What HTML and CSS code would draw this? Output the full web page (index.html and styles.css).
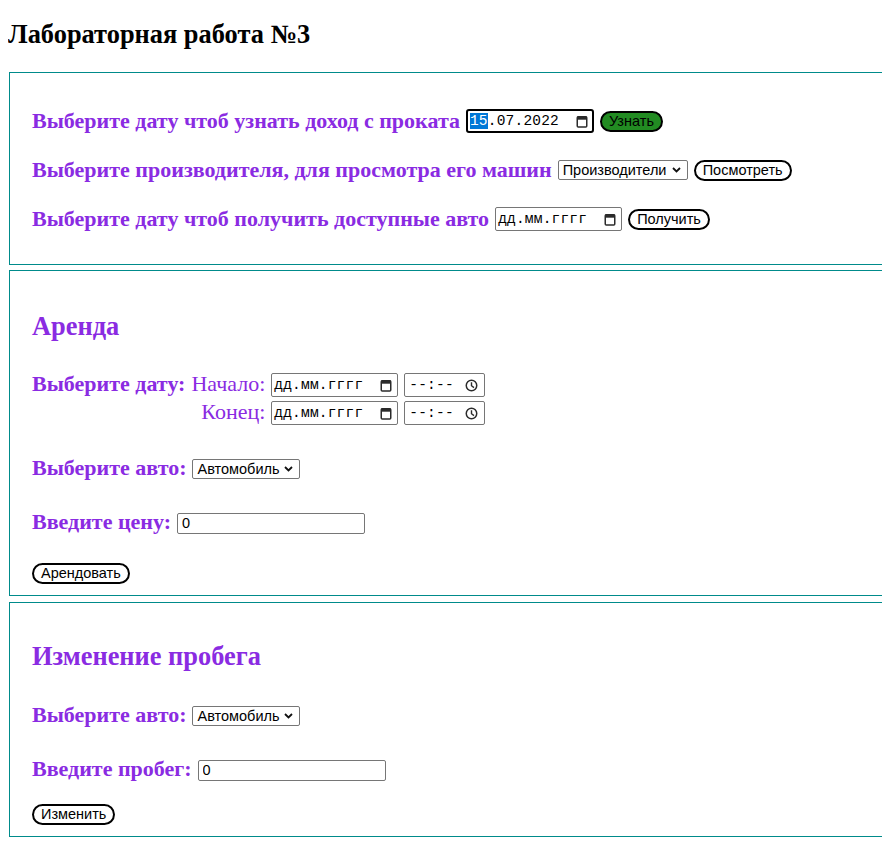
FILE: index.html
```html
<!DOCTYPE html>
<html lang="ru">
<head>
<meta charset="utf-8">
<title>Лабораторная работа №3</title>
<link rel="stylesheet" href="styles.css">
</head>
<body>
<h1 class="title">Лабораторная работа №3</h1>

<section class="box box-report">
  <div class="row">
    <span class="label">Выберите дату чтоб узнать доход с проката</span>
    <span class="date date-focused"><span class="date-text"><span class="seg-selected">15</span>.07.2022</span><svg class="cal-icon" width="12" height="13" viewBox="0 0 12 13"><rect x="1.25" y="1.75" width="9.5" height="10.25" rx="1" fill="none" stroke="#2b2b2b" stroke-width="1.5"/><rect x="1" y="1.5" width="10" height="3.2" fill="#2b2b2b"/></svg></span>
    <button class="btn btn-green">Узнать</button>
  </div>
  <div class="row">
    <span class="label">Выберите производителя, для просмотра его машин</span>
    <span class="select select-maker"><select class="select-field"><option>Производители</option></select><svg class="chevron" width="9" height="6" viewBox="0 0 9 6"><path d="M1 1 L4.5 4.5 L8 1" fill="none" stroke="#111" stroke-width="1.8"/></svg></span>
    <button class="btn">Посмотреть</button>
  </div>
  <div class="row">
    <span class="label">Выберите дату чтоб получить доступные авто</span>
    <span class="date"><span class="date-text">дд.мм.гггг</span><svg class="cal-icon" width="12" height="13" viewBox="0 0 12 13"><rect x="1.25" y="1.75" width="9.5" height="10.25" rx="1" fill="none" stroke="#2b2b2b" stroke-width="1.5"/><rect x="1" y="1.5" width="10" height="3.2" fill="#2b2b2b"/></svg></span>
    <button class="btn">Получить</button>
  </div>
</section>

<section class="box box-rent">
  <h2 class="section-title">Аренда</h2>
  <div class="period">
    <span class="label">Выберите дату:</span>
    <span class="sublabel">Начало:</span>
    <span class="date"><span class="date-text">дд.мм.гггг</span><svg class="cal-icon" width="12" height="13" viewBox="0 0 12 13"><rect x="1.25" y="1.75" width="9.5" height="10.25" rx="1" fill="none" stroke="#2b2b2b" stroke-width="1.5"/><rect x="1" y="1.5" width="10" height="3.2" fill="#2b2b2b"/></svg></span>
    <span class="time"><span class="time-text">--:--</span><svg class="clock-icon" width="13" height="13" viewBox="0 0 13 13"><circle cx="6.5" cy="6.5" r="5.25" fill="none" stroke="#2b2b2b" stroke-width="1.5"/><path d="M6.5 3.2 V6.7 L9 8.6" fill="none" stroke="#2b2b2b" stroke-width="1.4"/></svg></span>
    <span class="sublabel sublabel-end">Конец:</span>
    <span class="date"><span class="date-text">дд.мм.гггг</span><svg class="cal-icon" width="12" height="13" viewBox="0 0 12 13"><rect x="1.25" y="1.75" width="9.5" height="10.25" rx="1" fill="none" stroke="#2b2b2b" stroke-width="1.5"/><rect x="1" y="1.5" width="10" height="3.2" fill="#2b2b2b"/></svg></span>
    <span class="time"><span class="time-text">--:--</span><svg class="clock-icon" width="13" height="13" viewBox="0 0 13 13"><circle cx="6.5" cy="6.5" r="5.25" fill="none" stroke="#2b2b2b" stroke-width="1.5"/><path d="M6.5 3.2 V6.7 L9 8.6" fill="none" stroke="#2b2b2b" stroke-width="1.4"/></svg></span>
  </div>
  <div class="row row-car">
    <span class="label">Выберите авто:</span>
    <span class="select select-car"><select class="select-field"><option>Автомобиль</option></select><svg class="chevron" width="9" height="6" viewBox="0 0 9 6"><path d="M1 1 L4.5 4.5 L8 1" fill="none" stroke="#111" stroke-width="1.8"/></svg></span>
  </div>
  <div class="row row-input">
    <span class="label">Введите цену:</span>
    <input class="text-input" type="text" value="0">
  </div>
  <div class="row row-action">
    <button class="btn">Арендовать</button>
  </div>
</section>

<section class="box box-mileage">
  <h2 class="section-title">Изменение пробега</h2>
  <div class="row row-car">
    <span class="label">Выберите авто:</span>
    <span class="select select-car"><select class="select-field"><option>Автомобиль</option></select><svg class="chevron" width="9" height="6" viewBox="0 0 9 6"><path d="M1 1 L4.5 4.5 L8 1" fill="none" stroke="#111" stroke-width="1.8"/></svg></span>
  </div>
  <div class="row row-input">
    <span class="label">Введите пробег:</span>
    <input class="text-input" type="text" value="0">
  </div>
  <div class="row row-action">
    <button class="btn">Изменить</button>
  </div>
</section>
</body>
</html>
```

FILE: styles.css
```css
html {
  overflow: hidden;
}

body {
  margin: 8px;
  background: #fff;
  font-family: "Liberation Serif", "Times New Roman", serif;
}

.title {
  font: bold 26.4px/30px "Liberation Serif", "Times New Roman", serif;
  color: #000;
  margin: 11px 0 23px;
}

.box {
  box-sizing: border-box;
  width: calc(100% + 160px);
  border: 1px solid #008b8b;
  margin-left: 1px;
  padding-left: 22px;
  display: flex;
  flex-direction: column;
  align-items: flex-start;
}

.box-report {
  padding-top: 36px;
  padding-bottom: 33px;
  gap: 25px;
}

.box-rent {
  margin-top: 5px;
  padding-top: 40px;
  padding-bottom: 10px;
}

.box-mileage {
  margin-top: 6px;
  padding-top: 38px;
  padding-bottom: 10px;
}

.section-title {
  font: bold 26.4px/30px "Liberation Serif", "Times New Roman", serif;
  color: #8a2be2;
  margin: 0;
}

.row {
  display: flex;
  align-items: center;
  gap: 6px;
  height: 24px;
}

.label {
  font: bold 22px/24px "Liberation Serif", "Times New Roman", serif;
  color: #8a2be2;
  margin-bottom: 3px;
  white-space: nowrap;
}

.box-report .label {
  margin-bottom: 1px;
}

.sublabel {
  font: 22px/24px "Liberation Serif", "Times New Roman", serif;
  color: #8a2be2;
  margin-bottom: 3px;
  justify-self: end;
  white-space: nowrap;
}

.sublabel-end {
  grid-column: 2;
}

.period {
  margin-top: 32px;
  display: grid;
  grid-template-columns: auto auto auto auto;
  grid-template-rows: 24px 24px;
  column-gap: 6px;
  row-gap: 4px;
  align-items: center;
}

.box-rent .row-car { margin-top: 32px; }
.box-rent .row-input { margin-top: 30px; }
.box-rent .row-action { margin-top: 26px; }

.box-mileage .row-car { margin-top: 33px; }
.box-mileage .row-input { margin-top: 30px; }
.box-mileage .row-action { margin-top: 20px; }

/* date / time fields */
.date,
.time {
  display: inline-flex;
  align-items: center;
  justify-content: space-between;
  box-sizing: border-box;
  height: 24px;
  border: 1px solid #767676;
  border-radius: 2px;
  background: #fff;
  font: 14.5px/18px "Liberation Mono", "DejaVu Sans Mono", monospace;
  color: #000;
  letter-spacing: 0.2px;
}

.date {
  width: 127px;
  padding: 0 5px 0 2px;
}

.time {
  width: 81px;
  padding: 0 6px 0 4px;
}

.date-focused {
  width: 128px;
  border: 2px solid #000;
  border-radius: 3px;
  padding: 0 4px 0 2px;
}

.seg-selected {
  background: #0078d7;
  color: #fff;
}

.cal-icon,
.clock-icon {
  flex: none;
}

/* select */
.select {
  position: relative;
  display: inline-flex;
}

.select-field {
  appearance: none;
  -webkit-appearance: none;
  box-sizing: border-box;
  height: 20px;
  margin: 0;
  padding: 0 18px 0 4px;
  border: 1px solid #767676;
  border-radius: 2px;
  background: #fff;
  color: #000;
  font: 14.5px "Liberation Sans", Arial, sans-serif;
}

.select-maker .select-field { width: 130px; }
.select-car .select-field { width: 108px; }

.chevron {
  position: absolute;
  right: 7px;
  top: 7px;
  pointer-events: none;
}

/* text input */
.text-input {
  box-sizing: border-box;
  width: 188px;
  height: 21px;
  margin: 0;
  padding: 0 4px;
  border: 1px solid #767676;
  border-radius: 2px;
  font: 14.5px "Liberation Sans", Arial, sans-serif;
  color: #000;
}

/* buttons */
.btn {
  box-sizing: border-box;
  height: 21px;
  margin: 0;
  padding: 0 7px;
  border: 2px solid #000;
  border-radius: 11px;
  background: #fff;
  color: #000;
  font: 14.5px/17px "Liberation Sans", Arial, sans-serif;
}

.btn-green {
  background: #228b22;
}
```
